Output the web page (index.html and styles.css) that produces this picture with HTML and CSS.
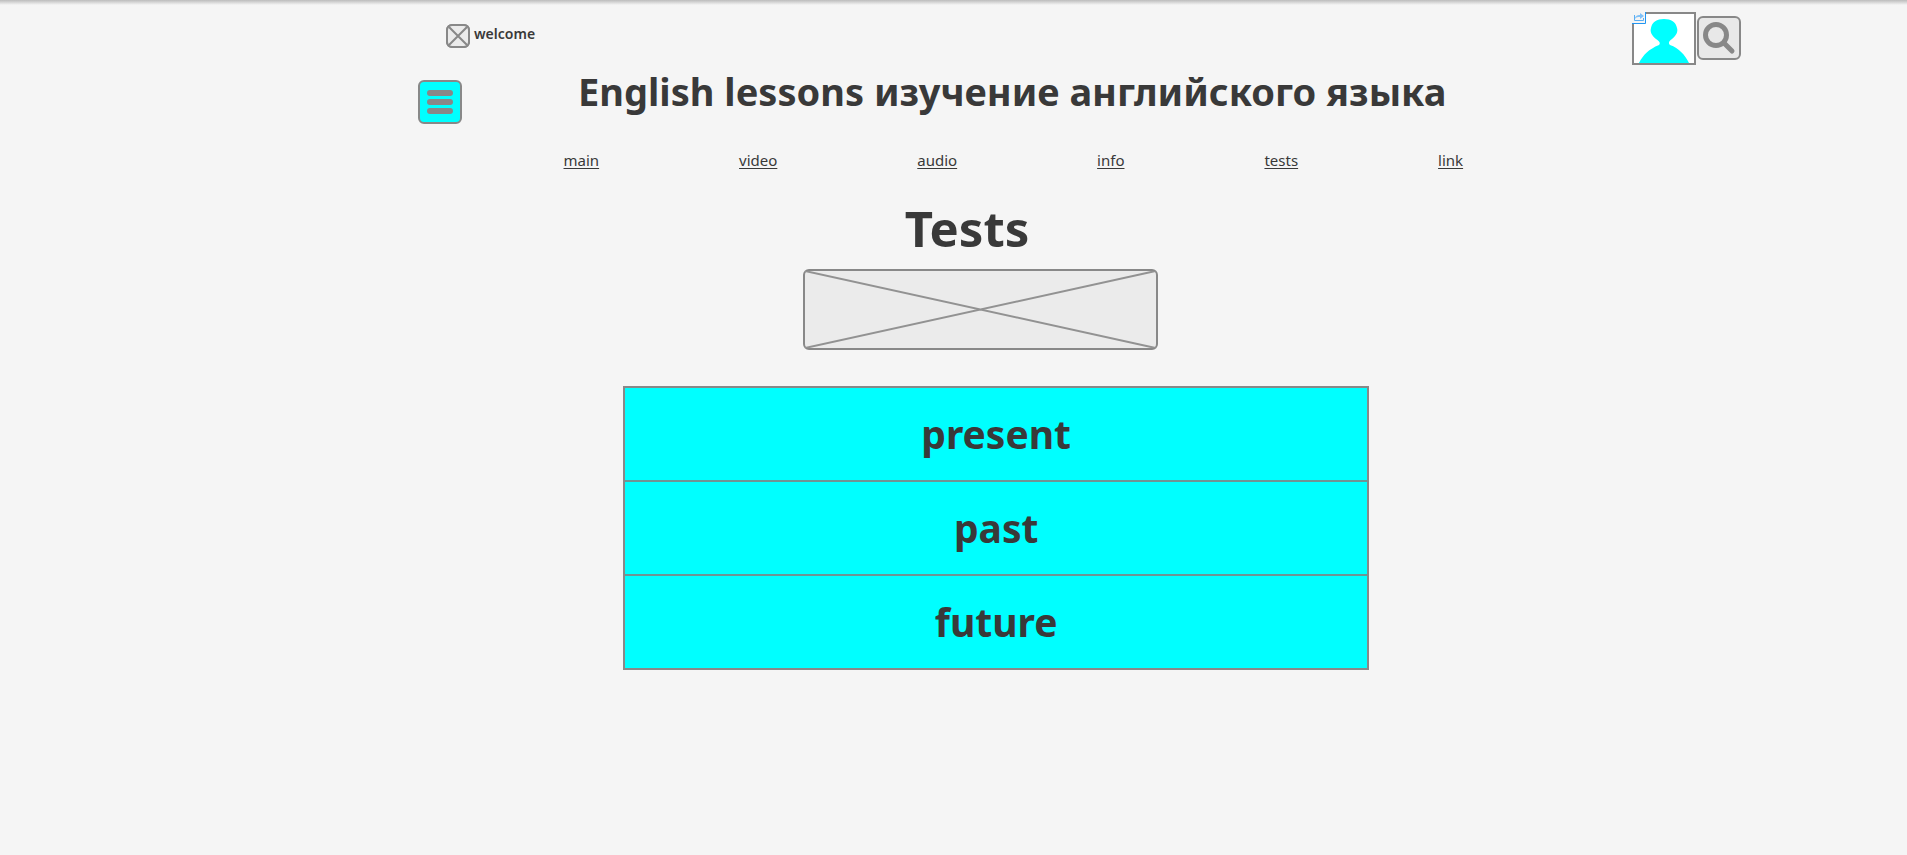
FILE: index.html
```html
<!DOCTYPE html>
<html lang="en">
<head>
<meta charset="utf-8">
<meta name="viewport" content="width=device-width, initial-scale=1">
<title>English lessons</title>
<link rel="stylesheet" href="styles.css">
</head>
<body>
<div class="page">
  <div class="content">
    <header class="topbar">
      <div class="greeting">
        <svg class="greeting-icon" viewBox="0 0 24 24" aria-hidden="true"><rect x="1" y="1" width="22" height="22" rx="5" fill="#ebebeb"/><path d="M3 3 21 21M21 3 3 21"/><rect x="1" y="1" width="22" height="22" rx="5" fill="none"/></svg>
        <span>welcome</span>
      </div>
      <div class="tools">
        <a class="avatar" href="#profile" aria-label="Profile">
          <svg class="person" viewBox="0 0 60 49" aria-hidden="true"><path d="M5 49C9 41 15 35 25 31C27 29 25 27 22 25C17 21 16 17 17 14C18 8 23 5 30 5C37 5 42 8 43 14C44 17 43 21 38 25C35 27 34 29 36 31C45 34 51 41 55 49Z"/></svg>
          <svg class="link-badge" viewBox="0 0 14 12" aria-hidden="true"><rect width="14" height="12" fill="#f4f4f4"/><path d="M0 11.5H13.5V0" fill="none" stroke="#2196f3"/><path d="M3 7C3 4 5 3 8 3V1L12 4L8 7V5C6 5 4 5 3 7Z" fill="#7fc1f8"/><path d="M2.5 3V8.5H11.5V6" fill="none" stroke="#5aaef2"/></svg>
        </a>
        <button class="icon-button search" type="button" aria-label="Search">
          <svg viewBox="0 0 40 40" aria-hidden="true"><circle cx="17" cy="17" r="10.5" fill="none" stroke="#888" stroke-width="5"/><path d="M25 25 33 33" stroke="#888" stroke-width="5" stroke-linecap="round"/></svg>
        </button>
      </div>
    </header>
    <div class="masthead">
      <button class="icon-button menu" type="button" aria-label="Menu">
        <svg viewBox="0 0 40 40" aria-hidden="true"><path d="M10 11H30M10 20H30M10 29H30" stroke="#888" stroke-width="6" stroke-linecap="round"/></svg>
      </button>
      <h1 class="site-title">English lessons изучение английского языка</h1>
    </div>
    <nav class="nav">
      <a href="#main">main</a>
      <a href="#video">video</a>
      <a href="#audio">audio</a>
      <a href="#info">info</a>
      <a href="#tests">tests</a>
      <a href="#link">link</a>
    </nav>
    <main>
      <h2 class="section-title">Tests</h2>
      <div class="banner">
        <svg class="banner-cross" viewBox="0 0 100 100" preserveAspectRatio="none" aria-hidden="true"><path d="M0 0 100 100M100 0 0 100"/></svg>
      </div>
      <div class="tenses">
        <a href="#present">present</a>
        <a href="#past">past</a>
        <a href="#future">future</a>
      </div>
    </main>
  </div>
</div>
</body>
</html>
```
FILE: styles.css
```css
* { box-sizing: border-box; }

body {
  margin: 0;
  min-height: 100vh;
  background: linear-gradient(#bcbcbc, #f5f5f5 5px) no-repeat #f5f5f5;
  color: #393939;
  font-family: "Noto Sans", "Open Sans", sans-serif;
}

a { color: inherit; }
svg { display: block; }

.page {
  display: grid;
  grid-template-columns: 418fr minmax(0, 1323fr) 166fr;
}
.content { grid-column: 2; padding-top: 12px; }

.topbar { display: flex; justify-content: space-between; align-items: flex-start; }
.greeting {
  display: flex;
  gap: 4px;
  padding: 12px 0 0 28px;
  font-size: 14px;
  line-height: 20px;
  font-weight: 600;
}
.greeting-icon { width: 24px; height: 24px; stroke: #888; stroke-width: 2; }

.tools { display: flex; align-items: flex-start; gap: 1px; }
.avatar {
  position: relative;
  width: 64px;
  height: 53px;
  border: 2px solid #888;
  background: #fff;
}
.person { width: 60px; height: 49px; fill: #0ff; }
.link-badge { position: absolute; top: -2px; left: -2px; width: 14px; height: 12px; }

.icon-button {
  flex: none;
  width: 44px;
  height: 44px;
  padding: 0;
  border: 2px solid #888;
  border-radius: 6px;
  background: #e8e8e8;
}
.search { margin-top: 4px; }
.menu { margin-top: 15px; background: #0ff; }

.masthead { display: flex; align-items: flex-start; }
.site-title {
  flex: 1;
  margin: 0;
  padding-right: 13.5%;
  font-size: 38px;
  line-height: 52px;
  text-align: center;
}

.nav {
  display: flex;
  justify-content: space-between;
  width: 68%;
  margin: 24px 0 0 11%;
  font-size: 15px;
  line-height: 24px;
}
.nav a { text-underline-offset: 2px; }

.section-title {
  margin: 22px 17% 0 0;
  font-size: 49px;
  line-height: 68px;
  text-align: center;
}
.banner {
  width: 26.8%;
  height: 81px;
  margin: 7px 0 0 29.1%;
  border: 2px solid #888;
  border-radius: 6px;
  background: #ebebeb;
}
.banner-cross { width: 100%; height: 100%; }
.banner-cross path { stroke: #929292; stroke-width: 2; vector-effect: non-scaling-stroke; }

.tenses {
  width: 56.4%;
  margin: 36px 0 36px 15.5%;
  border: 2px solid #888;
  background: #0ff;
  font-size: 39px;
  font-weight: 700;
  line-height: 92px;
  text-align: center;
}
.tenses a { display: block; text-decoration: none; }
.tenses a + a { border-top: 2px solid #6f9494; }
```
